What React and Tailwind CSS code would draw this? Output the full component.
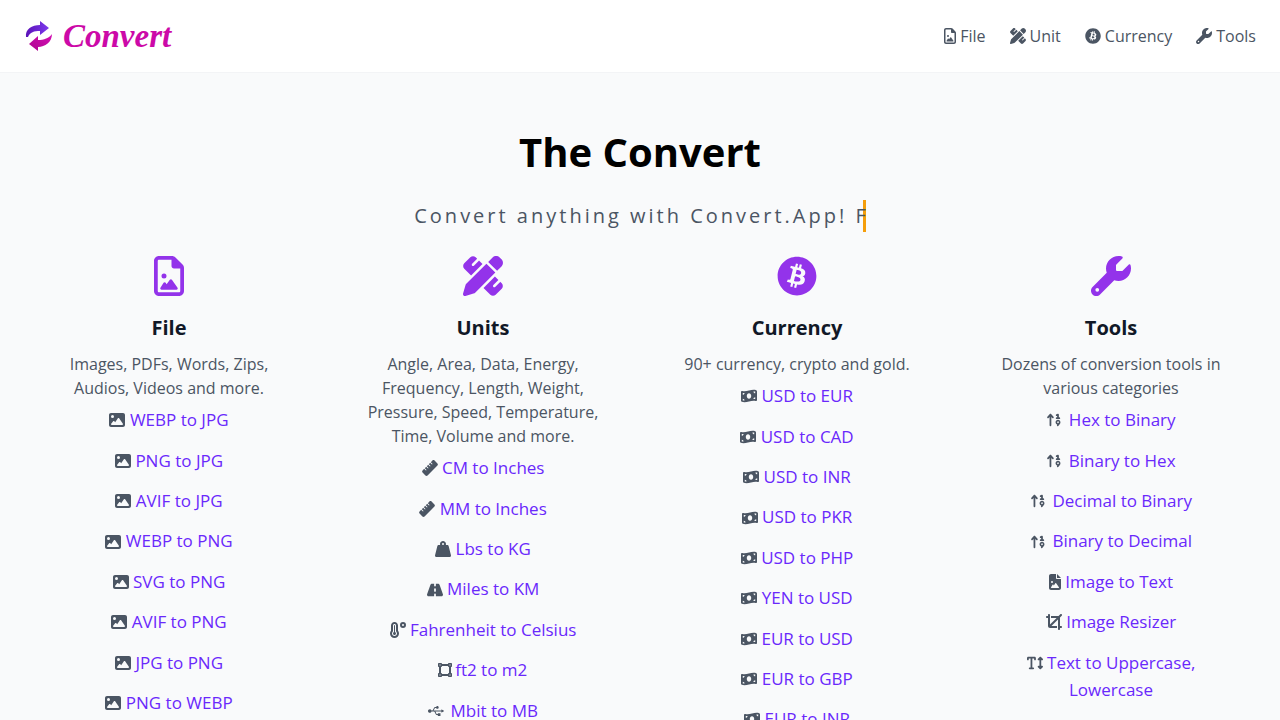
import React from "react";
import {
  FaRegFileImage,
  FaPenRuler,
  FaBitcoin,
  FaWrench,
  FaImage,
  FaMoneyBillWave,
  FaRuler,
  FaWeightHanging,
  FaRoad,
  FaTemperatureHigh,
  FaVectorSquare,
  FaUsb,
  FaArrowUp19,
  FaFileImage,
  FaCrop,
  FaTextHeight,
} from "react-icons/fa6";

const columns = [
  {
    title: "File",
    icon: FaRegFileImage,
    text: "Images, PDFs, Words, Zips, Audios, Videos and more.",
    links: [
      [FaImage, "WEBP to JPG"],
      [FaImage, "PNG to JPG"],
      [FaImage, "AVIF to JPG"],
      [FaImage, "WEBP to PNG"],
      [FaImage, "SVG to PNG"],
      [FaImage, "AVIF to PNG"],
      [FaImage, "JPG to PNG"],
      [FaImage, "PNG to WEBP"],
    ],
  },
  {
    title: "Units",
    icon: FaPenRuler,
    text: "Angle, Area, Data, Energy, Frequency, Length, Weight, Pressure, Speed, Temperature, Time, Volume and more.",
    links: [
      [FaRuler, "CM to Inches"],
      [FaRuler, "MM to Inches"],
      [FaWeightHanging, "Lbs to KG"],
      [FaRoad, "Miles to KM"],
      [FaTemperatureHigh, "Fahrenheit to Celsius"],
      [FaVectorSquare, "ft2 to m2", "-mx-0.5"],
      [FaUsb, "Mbit to MB", "mr-0.5"],
    ],
  },
  {
    title: "Currency",
    icon: FaBitcoin,
    text: "90+ currency, crypto and gold.",
    links: [
      [FaMoneyBillWave, "USD to EUR"],
      [FaMoneyBillWave, "USD to CAD"],
      [FaMoneyBillWave, "USD to INR"],
      [FaMoneyBillWave, "USD to PKR"],
      [FaMoneyBillWave, "USD to PHP"],
      [FaMoneyBillWave, "YEN to USD"],
      [FaMoneyBillWave, "EUR to USD"],
      [FaMoneyBillWave, "EUR to GBP"],
      [FaMoneyBillWave, "EUR to INR"],
    ],
  },
  {
    title: "Tools",
    icon: FaWrench,
    text: "Dozens of conversion tools in various categories",
    links: [
      [FaArrowUp19, "Hex to Binary", "mr-0.5"],
      [FaArrowUp19, "Binary to Hex", "mr-0.5"],
      [FaArrowUp19, "Decimal to Binary", "mr-0.5"],
      [FaArrowUp19, "Binary to Decimal", "mr-0.5"],
      [FaFileImage, "Image to Text", "-mx-0.5"],
      [FaCrop, "Image Resizer"],
      [FaTextHeight, "Text to Uppercase, Lowercase"],
    ],
  },
];

const nav = [
  [FaRegFileImage, "File", "-mr-0.5"],
  [FaPenRuler, "Unit"],
  [FaBitcoin, "Currency"],
  [FaWrench, "Tools"],
];

function Logo() {
  return (
    <svg viewBox="0 0 28 32" className="h-8 w-7">
      <defs>
        <linearGradient id="top" x1="0" x2="1" y1="0" y2="0">
          <stop offset="0" stopColor="#5b12b8" />
          <stop offset="1" stopColor="#7c3aed" />
        </linearGradient>
        <linearGradient id="bottom" x1="0" x2="1" y1="1" y2="0">
          <stop offset="0" stopColor="#ad0690" />
          <stop offset="1" stopColor="#d40fb4" />
        </linearGradient>
      </defs>
      <path d="M1 17C0 9 7 5 15 5V1L24 8 15 15V11C9 11 5 12 3 17Z" fill="url(#top)" />
      <path d="M27 14C27 22 20 27 13 27V31L4 24 13 16V20C19 20 24 18 27 14Z" fill="url(#bottom)" />
    </svg>
  );
}

function App() {
  return (
    <div className="min-h-screen bg-[#f9fafb] font-['Open_Sans',sans-serif]">
      <header className="h-[73px] bg-white border-b border-[#f3f4f6] flex items-center justify-between px-6">
        <div className="flex items-center gap-2.5 pl-px">
          <Logo />
          <span className="font-['Liberation_Serif',serif] font-bold italic text-[33px] leading-none text-[#cc09a8]">
            Convert
          </span>
        </div>
        <nav className="flex items-center gap-6 text-[#4b5563]">
          {nav.map(([Icon, label, extra]) => (
            <a key={label} className="flex items-center gap-1">
              <Icon className={`h-4 w-auto ${extra || ""}`} />
              {label}
            </a>
          ))}
        </nav>
      </header>

      <main className="pt-[49px] px-3">
        <h1 className="text-center text-[40px] leading-[60px] font-bold text-black">The Convert</h1>
        <div className="mt-[18px] flex justify-center">
          <p className="text-xl leading-8 tracking-[3px] text-[#4b5563] border-r-[3px] border-[#f59e0b]">
            <span className="-mr-[6px] inline-block">Convert anything with Convert.App! F</span>
          </p>
        </div>

        <div className="grid grid-cols-4 mt-6">
          {columns.map((col) => (
            <section key={col.title} className="flex flex-col items-center text-center">
              <col.icon className="h-10 w-auto text-[#9333ea]" />
              <h2 className="mt-4 text-xl leading-8 font-bold text-[#111827]">{col.title}</h2>
              <p className="mt-2 max-w-[240px] text-[#4b5563]">{col.text}</p>
              <ul className="-mt-[0.4px] max-w-[240px] text-[17px] leading-[27.2px]">
                {col.links.map(([Icon, label, extra]) => (
                  <li key={label} className="py-[6.6px]">
                    <Icon className={`inline h-4 w-auto align-[-0.125em] text-[#4b5563] ${extra || ""}`} />{" "}
                    <a className="text-[#6a28fb]">{label}</a>
                  </li>
                ))}
              </ul>
            </section>
          ))}
        </div>
      </main>
    </div>
  );
}

export default App;
